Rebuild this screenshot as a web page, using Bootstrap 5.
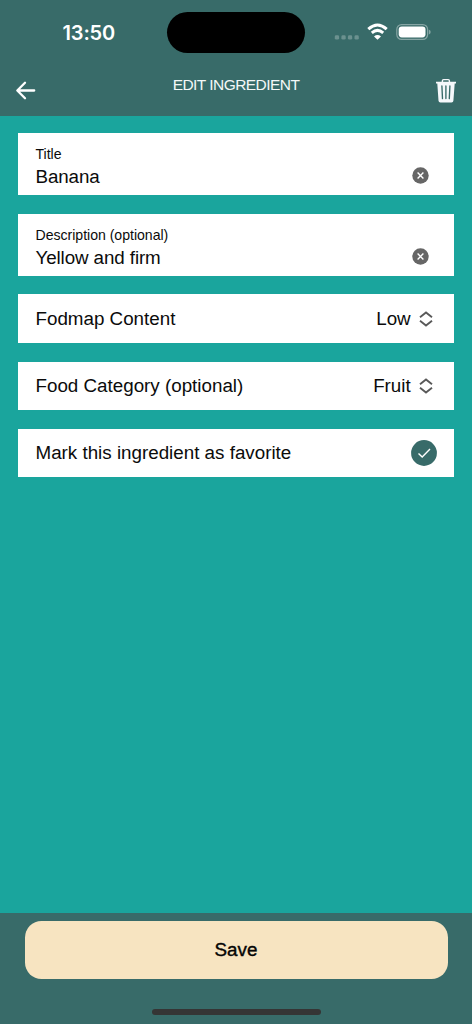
<!DOCTYPE html>
<html lang="en">
<head>
<meta charset="utf-8">
<meta name="viewport" content="width=device-width, initial-scale=1">
<title>Edit ingredient</title>
<link href="https://cdn.jsdelivr.net/npm/bootstrap@5.3.0/dist/css/bootstrap.min.css" rel="stylesheet">
<style>
  body { background: #1aa59d; color: #0b0b0b; font-family: "Liberation Sans", Arial, sans-serif; font-size: 18.8px; line-height: 22px; }
  svg { display: block; flex: none; }
  .bar { background: #386b69; color: #fff; }
  .top-bar { height: 116px; }
  .status { height: 66px; display: grid; grid-template-columns: 167px 138px 1fr; }
  .clock { font: 600 20px/24px Inter, sans-serif; padding: 21px 0 0 62.5px; letter-spacing: -.15px; }
  .island { height: 41px; margin-top: 12px; background: #000; }
  .signals { padding: 23px 0 0 29px; }
  .toolbar { height: 50px; display: grid; grid-template-columns: 60px 1fr 60px; }
  .screen-title { font-size: 15.5px; line-height: 20px; padding-top: 9px; letter-spacing: -.55px; color: #f4f8f8; }
  .icon-btn { background: none; border: 0; padding: 0; }
  .back { margin: 14px 0 0 15px; }
  .trash { margin: 12px 0 0 23px; }
  .fields { padding: 17.3px 18px 0; gap: 18.6px; }
  .field { background: #fff; padding: 0 17.5px 0 17.5px; height: 48.6px; }
  .field-tall { height: 62px; padding-top: 12px; }
  .field-label { font-size: 14.1px; line-height: 18px; letter-spacing: -.02px; }
  .field-value { line-height: 22px; margin-top: 3px; letter-spacing: -.1px; }
  .clear { margin: 22px 8px 0 0; }
  .picker { gap: 8px; padding-right: 3.8px; }
  .bottom-bar { height: 111px; padding: 8px 24.5px 0; }
  .save { height: 58px; border: 0; border-radius: 16.5px; background: #f7e4c1; color: #050505; font-size: 18.8px; line-height: 24px; -webkit-text-stroke: .4px #050505; }
  .home { width: 169px; height: 6px; background: #353535; margin: 30px auto 0; }
</style>
</head>
<body class="vh-100 d-flex flex-column overflow-hidden">
<header class="bar top-bar">
  <div class="status">
    <div class="clock">13:50</div>
    <div class="island rounded-pill"></div>
    <div class="signals">
      <svg width="100" height="20" viewBox="334 23 100 20">
        <g fill="#6b918f"><rect x="334.8" y="35.3" width="4.3" height="4.3" rx="1.4"/><rect x="341.4" y="35.3" width="4.3" height="4.3" rx="1.4"/><rect x="347.9" y="35.3" width="4.3" height="4.3" rx="1.4"/><rect x="354.5" y="35.3" width="4.3" height="4.3" rx="1.4"/></g>
        <path d="M368.3 29.1Q377.5 20.9 386.7 29.1M371.8 32.8Q377.5 28 383.2 32.8" fill="none" stroke="#fff" stroke-width="3"/>
        <path d="M374 36.4Q377.5 33.5 381 36.4L377.5 39.7z" fill="#fff"/>
        <rect x="396.8" y="24.6" width="30.8" height="14.8" rx="4.8" fill="none" stroke="#86a5a4" stroke-width="1.2"/>
        <rect x="398.7" y="26.5" width="26.8" height="10.9" rx="3.1" fill="#fff"/>
        <path d="M428.9 29.8Q430.7 30.2 430.7 32T428.9 34.4z" fill="#86a5a4"/>
      </svg>
    </div>
  </div>
  <div class="toolbar">
    <div>
      <button class="icon-btn back" aria-label="Back"><svg width="22" height="22" viewBox="15 80 22 22" fill="none" stroke="#fff" stroke-width="2.3" stroke-linecap="round" stroke-linejoin="round"><path d="M25 82.8 17.3 90.5 25 98.2M17.6 90.5H34.2"/></svg></button>
    </div>
    <div class="screen-title text-center">EDIT INGREDIENT</div>
    <div>
      <button class="icon-btn trash" aria-label="Delete"><svg width="22" height="26" viewBox="435 78 22 26"><path d="M442.4 82.5V80.8Q442.4 79.6 443.6 79.6H448.2Q449.4 79.6 449.4 80.8V82.5" fill="none" stroke="#f5f8fb" stroke-width="1.4"/><path d="M436 81.8H456V83.6H454.7L453.4 100.7Q453.2 102.5 451.5 102.5H440.4Q438.7 102.5 438.5 100.7L437.3 83.6H436z" fill="#f5f8fb"/><path d="M441.9 86 442.5 98.6M445.9 86V98.6M449.9 86 449.3 98.6" stroke="#386b69" stroke-width="1.35" stroke-linecap="round"/></svg></button>
    </div>
  </div>
</header>

<main class="fields d-flex flex-column flex-grow-1">
  <div class="field field-tall d-flex justify-content-between">
    <div>
      <div class="field-label">Title</div>
      <div class="field-value">Banana</div>
    </div>
    <button class="icon-btn clear align-self-start" aria-label="Clear title"><svg width="17" height="17" viewBox="0 0 17 17"><circle cx="8.5" cy="8.5" r="8.2" fill="#666"/><path d="m5.6 5.6 5.8 5.8m0-5.8-5.8 5.8" stroke="#fff" stroke-width="1.4"/></svg></button>
  </div>
  <div class="field field-tall d-flex justify-content-between">
    <div>
      <div class="field-label">Description (optional)</div>
      <div class="field-value">Yellow and firm</div>
    </div>
    <button class="icon-btn clear align-self-start" aria-label="Clear description"><svg width="17" height="17" viewBox="0 0 17 17"><circle cx="8.5" cy="8.5" r="8.2" fill="#666"/><path d="m5.6 5.6 5.8 5.8m0-5.8-5.8 5.8" stroke="#fff" stroke-width="1.4"/></svg></button>
  </div>
  <div class="field d-flex justify-content-between align-items-center">
    <span>Fodmap Content</span>
    <span class="picker d-flex align-items-center">Low
      <svg width="14" height="16" viewBox="0 0 14 16" fill="none" stroke="#595959" stroke-width="1.9"><path d="M1 6.2 7 1.5l6 4.7M1 9.8l6 4.7 6-4.7"/></svg>
    </span>
  </div>
  <div class="field d-flex justify-content-between align-items-center">
    <span>Food Category (optional)</span>
    <span class="picker d-flex align-items-center">Fruit
      <svg width="14" height="16" viewBox="0 0 14 16" fill="none" stroke="#595959" stroke-width="1.9"><path d="M1 6.2 7 1.5l6 4.7M1 9.8l6 4.7 6-4.7"/></svg>
    </span>
  </div>
  <div class="field d-flex justify-content-between align-items-center">
    <span>Mark this ingredient as favorite</span>
    <svg width="26" height="26" viewBox="0 0 26 26"><circle cx="13" cy="13" r="12.9" fill="#386b69"/><path d="m7.5 13.4 3.7 3.6 7.8-8" fill="none" stroke="#fff" stroke-width="1.4"/></svg>
  </div>
</main>

<footer class="bar bottom-bar">
  <button class="save w-100 d-block">Save</button>
  <div class="home rounded-pill"></div>
</footer>
<script src="https://cdn.jsdelivr.net/npm/bootstrap@5.3.0/dist/js/bootstrap.bundle.min.js"></script>
</body>
</html>
